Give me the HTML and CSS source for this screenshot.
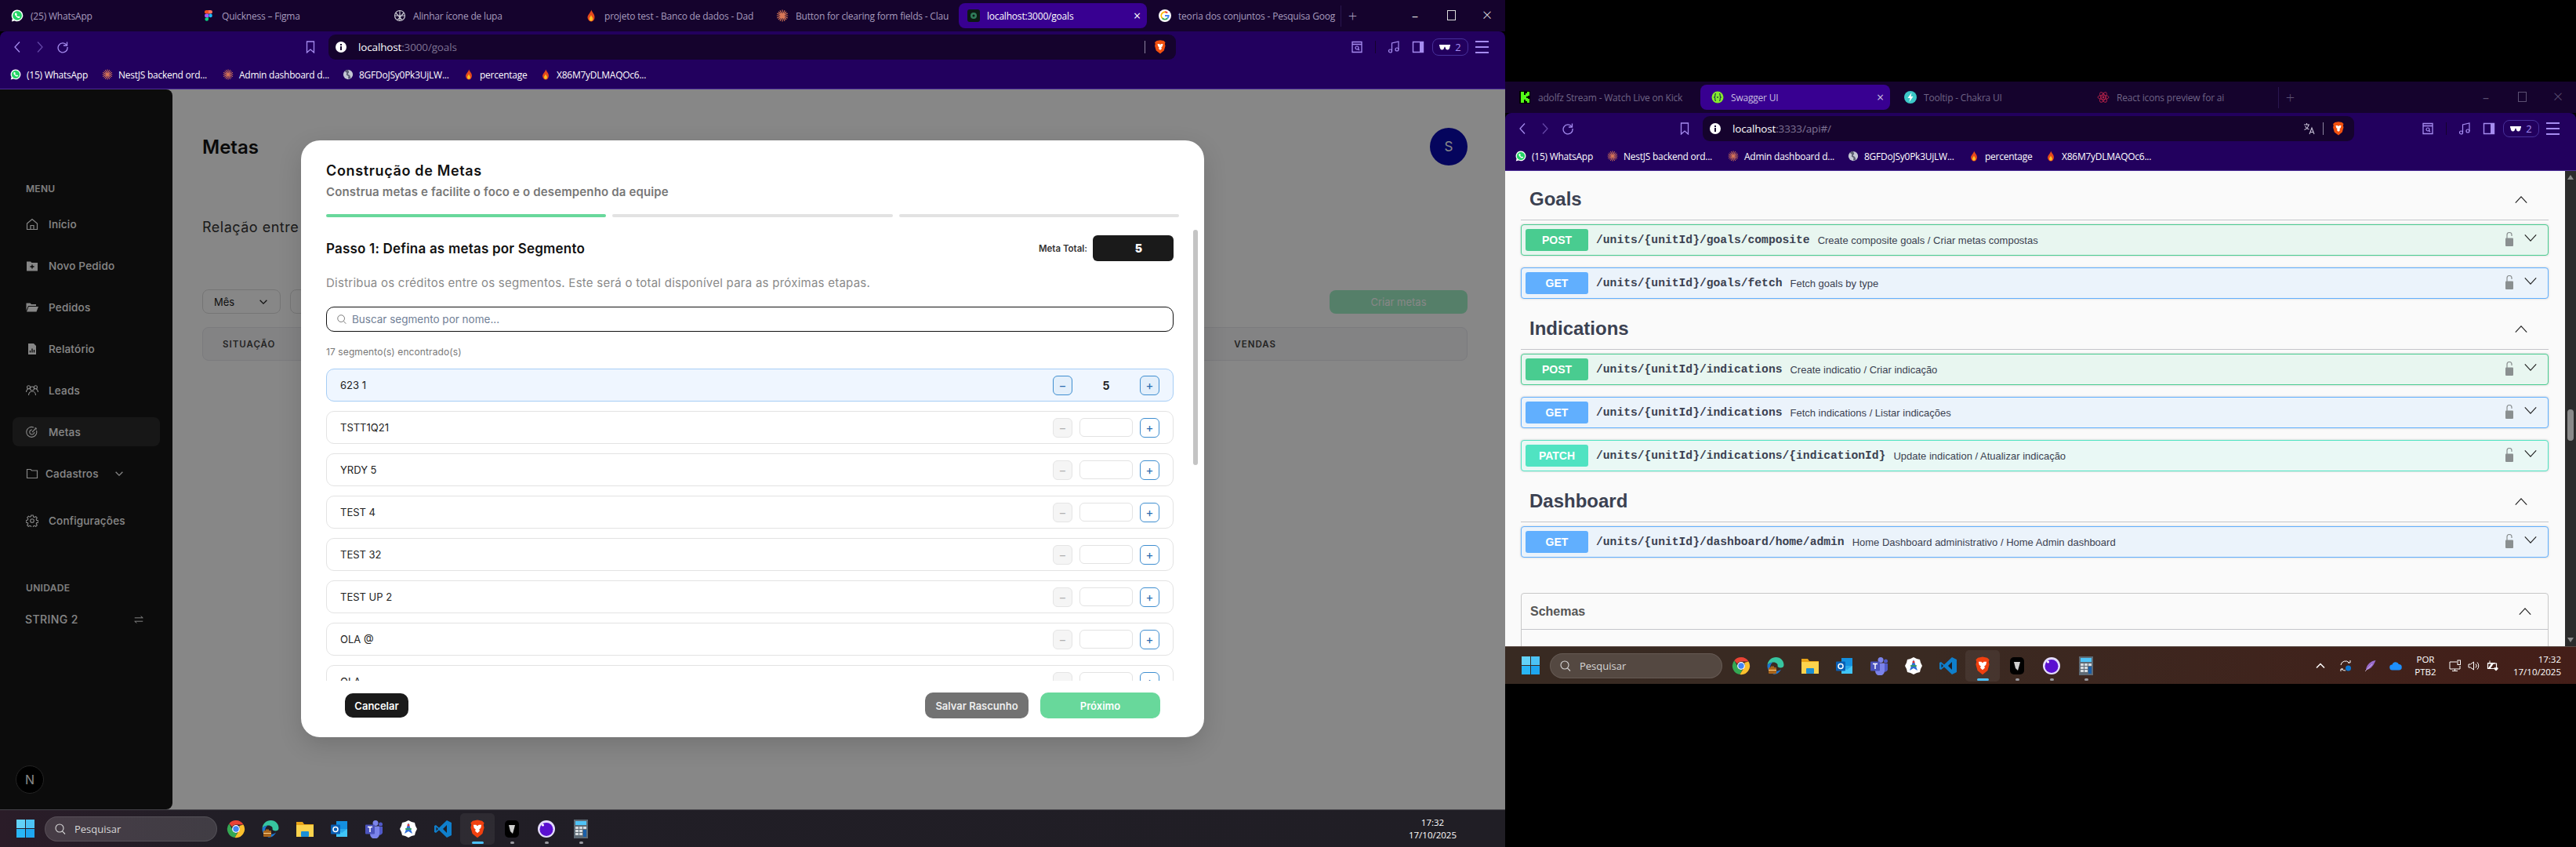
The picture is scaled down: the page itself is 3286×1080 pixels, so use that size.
FILE: index.html
```html
<!DOCTYPE html>
<html>
<head>
    <title>Metas / Swagger UI</title>
    <link rel="stylesheet" href="styles.css">
</head>
<body>

<svg class="defs" width="0" height="0">
    <!-- favicons -->
    <symbol id="f-wa" viewBox="0 0 16 16"><path d="M8 .6a7.3 7.3 0 0 0-6.2 11.1L.9 15.4l3.8-1A7.3 7.3 0 1 0 8 .6z" fill="#fff"/><circle cx="8" cy="7.9" r="5.9" fill="#25d366"/><path d="M5.6 4.6c-1 .8-.8 2.4.5 4s3 2.7 4.3 2.3c.8-.2 1.2-1 1-1.5L10 8.5l-.8.8c-.8-.3-1.7-1.2-2.1-2.1l.7-.8-.9-1.8z" fill="#fff"/></symbol>
    <symbol id="f-figma" viewBox="0 0 16 16"><path d="M5 1h3v4.6H5.3A2.3 2.3 0 0 1 5 1z" fill="#f24e1e"/><path d="M8 1h2.7a2.3 2.3 0 0 1 0 4.6H8z" fill="#ff7262"/><path d="M8 5.6H5.3a2.3 2.3 0 0 0 0 4.6H8z" fill="#a259ff"/><circle cx="10.5" cy="7.9" r="2.3" fill="#1abcfe"/><path d="M8 10.2H5.3A2.3 2.3 0 1 0 8 12.5z" fill="#0acf83"/></symbol>
    <symbol id="f-gpt" viewBox="0 0 16 16"><g fill="none" stroke="#c8c8d0" stroke-width="1.2"><circle cx="8" cy="8" r="6.5"/><path d="M3 4.5l8 9M13 4.5l-8 9M8 1.5v13M2 8h12"/></g></symbol>
    <symbol id="f-fire" viewBox="0 0 16 16"><path d="M8.3.5c.6 3 4.2 5 4.2 9.2a4.5 5.5 0 0 1-9 .6C3.500 7 7.200 4.500 8.300.5z" fill="#e5481c"/><path d="M8 7c.4 2 2.300 3 2.300 4.800a2.300 3 0 0 1-4.600 0C5.700 10 7.600 9 8 7z" fill="#fbbf24"/></symbol>
    <symbol id="f-spark" viewBox="0 0 16 16"><path d="M8 .5v15M.8 8h14.400M3 3l10 10M13 3L3 13M5 1.200l6 13.600M11 1.200L5 14.800M1.200 5l13.600 6M14.800 5L1.200 11" stroke="#d97757" stroke-width="1.100"/></symbol>
    <symbol id="f-globe" viewBox="0 0 16 16"><circle cx="8" cy="8" r="7" fill="#c4c7d4"/><path d="M8 1a7 7 0 0 0-5 2l3 2.500-.5 3 3 2-.5 3.800A7 7 0 0 0 12 13l-1.500-4-3-1.500 2-3L8 1z" fill="#5b5f72"/></symbol>
    <symbol id="f-goals" viewBox="0 0 16 16"><rect width="16" height="16" rx="3" fill="#0c1a14"/><circle cx="8" cy="8" r="4" fill="#2f7d5a"/><circle cx="8" cy="8" r="1.500" fill="#0c1a14"/></symbol>
    <symbol id="f-google" viewBox="0 0 16 16"><circle cx="8" cy="8" r="8" fill="#fff"/><path d="M8 3.300a4.700 4.700 0 0 1 3.200 1.200" fill="none" stroke="#ea4335" stroke-width="1.900"/><path d="M4.700 4.700A4.700 4.700 0 0 1 8 3.300M4.700 4.700a4.700 4.700 0 0 0 0 6.600" fill="none" stroke="#fbbc05" stroke-width="1.900"/><path d="M4.700 11.300a4.700 4.700 0 0 0 6.600 0" fill="none" stroke="#34a853" stroke-width="1.900"/><path d="M11.300 11.300A4.700 4.700 0 0 0 12.700 8H8" fill="none" stroke="#4285f4" stroke-width="1.900"/></symbol>
    <symbol id="f-kick" viewBox="0 0 16 16"><rect x="1" width="14" height="16" fill="#000"/><path d="M3 1h4v4h2V3h2V1h3v5h-2v1H10v2h2v1h2v5h-3v-2H9v-2H7v4H3z" fill="#53fc18"/></symbol>
    <symbol id="f-swagger" viewBox="0 0 16 16"><circle cx="8" cy="8" r="7.500" fill="#85ea2d"/><path d="M6 3.500c-1.500 0-1.200 2-1.200 3S3.800 8 3.800 8s1 .5 1 1.500-.3 3 1.200 3M10 3.500c1.500 0 1.200 2 1.200 3s1 1.500 1 1.500-1 .5-1 1.500.3 3-1.200 3" fill="none" stroke="#173647" stroke-width="1.100"/><circle cx="8" cy="8" r=".9" fill="#173647"/></symbol>
    <symbol id="f-chakra" viewBox="0 0 16 16"><circle cx="8" cy="8" r="8" fill="#3cc8c8"/><path d="M9.500 2L4.500 9h3l-1 5 5-7h-3z" fill="#fff"/></symbol>
    <symbol id="f-react" viewBox="0 0 16 16"><g fill="none" stroke="#b8224a" stroke-width=".9"><ellipse cx="8" cy="8" rx="7" ry="2.800"/><ellipse cx="8" cy="8" rx="7" ry="2.800" transform="rotate(60 8 8)"/><ellipse cx="8" cy="8" rx="7" ry="2.800" transform="rotate(120 8 8)"/></g><circle cx="8" cy="8" r="1.400" fill="#b8224a"/></symbol>

    <!-- toolbar -->
    <symbol id="t-back" viewBox="0 0 16 16"><path d="M11 1.500L5 8l6 6.500" fill="none" stroke="currentColor" stroke-width="1.300"/></symbol>
    <symbol id="t-fwd" viewBox="0 0 16 16"><path d="M5 1.500L11 8l-6 6.500" fill="none" stroke="currentColor" stroke-width="1.300"/></symbol>
    <symbol id="t-reload" viewBox="0 0 16 16"><path d="M13 5.500A6 6 0 1 0 14 8" fill="none" stroke="currentColor" stroke-width="1.300"/><path d="M13.500 1.500v4.500H9" fill="none" stroke="currentColor" stroke-width="1.300"/></symbol>
    <symbol id="t-mark" viewBox="0 0 16 16"><path d="M3.500 1h9v14L8 11l-4.500 4z" fill="none" stroke="currentColor" stroke-width="1.300"/></symbol>
    <symbol id="t-info" viewBox="0 0 16 16"><circle cx="8" cy="8" r="7" fill="#fff"/><path d="M7 7h2v5H7zM7 4h2v2H7z" fill="#15032d"/></symbol>
    <symbol id="t-brave" viewBox="0 0 16 18"><path d="M3.500 1L8 .2 12.500 1l2 2-.6 2 .6 2.500-1.700 6L8 17.500l-5.200-4-1.700-6L1.700 5l-.6-2z" fill="#f1500f"/><path d="M4.500 5h2.300L8 6l1.200-1h2.300l-.7 3L9.300 9.500 10 11l-2 2-2-2 .7-1.500L5.200 8z" fill="#fff"/></symbol>
    <symbol id="t-reader" viewBox="0 0 16 16"><path d="M2 1.500h12v13H2zM2 4.500h12" fill="none" stroke="currentColor" stroke-width="1.300"/><circle cx="8" cy="9" r="2" fill="none" stroke="currentColor" stroke-width="1.200"/><path d="M9.500 10.500l1.500 1.500" stroke="currentColor" stroke-width="1.200"/></symbol>
    <symbol id="t-music" viewBox="0 0 16 16"><circle cx="3.500" cy="13" r="2" fill="none" stroke="currentColor" stroke-width="1.200"/><circle cx="12" cy="11" r="2" fill="none" stroke="currentColor" stroke-width="1.200"/><path d="M5.500 13V3l8.500-2v10" fill="none" stroke="currentColor" stroke-width="1.200"/></symbol>
    <symbol id="t-side" viewBox="0 0 16 16"><path d="M1.500 1.500h13v13h-13z" fill="none" stroke="currentColor" stroke-width="1.400"/><path d="M10 1.500h4.500v13H10z" fill="currentColor"/></symbol>
    <symbol id="t-glass" viewBox="0 0 16 10"><path d="M0 1h16v2h-.5c0 3-1.500 5.500-3.500 5.500S8.800 6 8.500 4h-1C7.200 6 6 8.500 4 8.500S.5 6 .5 3H0z" fill="#fff"/></symbol>
    <symbol id="t-trans" viewBox="0 0 16 16"><path d="M1 3h7M4.500 1v2M7 3c-.5 3-3 5.500-5.500 6.500M2.500 5c1 2 3 3.500 5 4M8 15l3-8 3 8M9 12.500h4" fill="none" stroke="#c9c2d8" stroke-width="1.100"/></symbol>

    <!-- sidebar -->
    <symbol id="n-home" viewBox="0 0 16 16"><path d="M1.500 7L8 1.500 14.500 7v7.500h-13zM6 14.500v-5h4v5" fill="none" stroke="currentColor" stroke-width="1.200"/></symbol>
    <symbol id="n-new" viewBox="0 0 16 16"><path d="M1 2.500h5L7.500 4H15v10.500H1z" fill="currentColor"/><path d="M8 6.500v5M5.500 9h5" stroke="#0c0c0c" stroke-width="1.300"/></symbol>
    <symbol id="n-open" viewBox="0 0 16 16"><path d="M.5 2.500h5L7 4h6v2H3L.5 12z" fill="currentColor"/><path d="M3.500 7H16l-2.500 6.500H1z" fill="currentColor"/></symbol>
    <symbol id="n-report" viewBox="0 0 16 16"><path d="M3 1h7l3 3v11H3z" fill="currentColor"/><path d="M5.500 12.500V10M8 12.500V7.500M10.500 12.500V9" stroke="#0c0c0c" stroke-width="1.300"/></symbol>
    <symbol id="n-leads" viewBox="0 0 16 16"><g fill="none" stroke="currentColor" stroke-width="1.100"><circle cx="8" cy="5.500" r="2.500"/><path d="M3.500 14c0-3 2-5 4.500-5s4.500 2 4.500 5"/><circle cx="3.500" cy="3.800" r="2"/><circle cx="12.500" cy="3.800" r="2"/><path d="M.5 10c0-2 1-3.500 2.500-4M15.500 10c0-2-1-3.500-2.500-4"/></g></symbol>
    <symbol id="n-goal" viewBox="0 0 16 16"><g fill="none" stroke="currentColor" stroke-width="1.100"><path d="M13.500 6A6.500 6.500 0 1 1 10 2"/><path d="M10.800 8A3 3 0 1 1 8 5"/><path d="M8 8l5-5M11.500 2.500L13 3l.5 1.500"/></g></symbol>
    <symbol id="n-folder" viewBox="0 0 16 16"><path d="M1.500 2.500h4.500L7.500 4H14.500v9.500h-13z" fill="none" stroke="currentColor" stroke-width="1.200"/></symbol>
    <symbol id="n-gear" viewBox="0 0 16 16"><g fill="none" stroke="currentColor" stroke-width="1.100"><circle cx="8" cy="8" r="2.300"/><path d="M6.800 1h2.400l.4 2 1.300.6 1.800-1 1.600 1.800-1.100 1.600.5 1.400 2 .4v2.400l-2 .4-.5 1.300 1.100 1.700-1.600 1.700-1.800-1-1.300.5-.4 1.700H6.800l-.4-1.700-1.300-.5-1.800 1-1.600-1.700 1.100-1.700-.5-1.300-2-.4V7.400l2-.4.500-1.400-1.100-1.600 1.600-1.800 1.800 1 1.300-.6z"/></g></symbol>
    <symbol id="n-swap" viewBox="0 0 16 16"><path d="M2 5.500h12M11 3l3 2.500M14 10.500H2M5 13l-3-2.500" fill="none" stroke="currentColor" stroke-width="1.100"/></symbol>
    <symbol id="chev" viewBox="0 0 16 16"><path d="M3 5.500L8 10.500l5-5" fill="none" stroke="currentColor" stroke-width="1.500"/></symbol>
    <symbol id="search" viewBox="0 0 16 16"><circle cx="7" cy="7" r="5" fill="none" stroke="currentColor" stroke-width="1.100"/><path d="M10.500 10.800L14 14.500" stroke="currentColor" stroke-width="1.100"/></symbol>

    <!-- swagger -->
    <symbol id="s-up" viewBox="0 0 20 10"><path d="M2 9.500L10 1l8 8.500" fill="none" stroke="#222" stroke-width="1.300"/></symbol>
    <symbol id="s-down" viewBox="0 0 20 10"><path d="M2 .5L10 9l8-8.500" fill="none" stroke="#222" stroke-width="1.300"/></symbol>
    <symbol id="s-lock" viewBox="0 0 14 18"><path d="M4 8V3.500a3 3 0 0 1 6 0V5" fill="none" stroke="#8a8f90" stroke-width="1.200"/><rect x="2" y="7.500" width="10" height="10.500" rx="1" fill="#8a8f90"/></symbol>

    <!-- taskbar -->
    <symbol id="b-win" viewBox="0 0 23 23"><path d="M0 0h11v11H0z" fill="#63d2f8"/><path d="M12 0h11v11H12z" fill="#4cc3f5"/><path d="M0 12h11v11H0z" fill="#29b6f6"/><path d="M12 12h11v11H12z" fill="#1ea6ef"/></symbol>
    <symbol id="b-chrome" viewBox="0 0 24 24"><path d="M12 1a11 11 0 0 1 9.500 5.500H12A5.500 5.500 0 0 0 7 9.300L3.300 5.200A11 11 0 0 1 12 1z" fill="#ea4335"/><path d="M3.300 5.200L8.200 14a5.500 5.500 0 0 0 5.500 3.200L10.500 23A11 11 0 0 1 3.300 5.200z" fill="#34a853"/><path d="M21.500 6.500A11 11 0 0 1 10.500 23l5-8.500A5.500 5.500 0 0 0 16 8z" fill="#fbc02d"/><circle cx="12" cy="12" r="4.300" fill="#4285f4" stroke="#fff" stroke-width="1.200"/></symbol>
    <symbol id="b-edge" viewBox="0 0 24 24"><path d="M1.500 11C2 5 7 1 12.500 1c6 0 10 4.500 10 10 0 2.500-2 3.500-4 3.500-2.500 0-4-1-4-2.500 1-2-2-5-6-4.500C5.500 8 2.500 9 1.500 11z" fill="#37c5a0"/><path d="M1.500 11c1-2 4-3 7-3.500-3 2-4 5-3 9 .5 2 2 4 4 5.500C5 21.500 1 17 1.500 11z" fill="#1b76d2"/><path d="M9 22.500c-2-1.500-3.500-3.500-4-5.500 3 3 9 3 14-.5-2 4-6 7-10 6z" fill="#1b76d2"/><rect x="3" y="14" width="10" height="8" rx="1" fill="#a8641c"/><rect x="6" y="12.500" width="4" height="2" fill="#a8641c"/><path d="M3 17.500h10" stroke="#ffd28a"/></symbol>
    <symbol id="b-folder" viewBox="0 0 24 24"><path d="M1 3h8l2 3h12v16H1z" fill="#e8a317"/><path d="M1 7h22v15H1z" fill="#fcd34d"/><rect x="7" y="15" width="10" height="7" rx="1" fill="#1b8fd6"/></symbol>
    <symbol id="b-outlook" viewBox="0 0 24 24"><path d="M8 2h14v18H8z" fill="#1490df"/><path d="M8 12h14v10H8z" fill="#28a8ea"/><path d="M8 12l7 5 7-5v10H8z" fill="#50d9ff" opacity=".6"/><rect x="1" y="6.500" width="12" height="12" rx="1" fill="#0a5fb4"/><circle cx="7" cy="12.500" r="3" fill="none" stroke="#fff" stroke-width="1.500"/></symbol>
    <symbol id="b-teams" viewBox="0 0 24 24"><circle cx="14" cy="4.500" r="3.500" fill="#7b83eb"/><circle cx="20.500" cy="6" r="2.500" fill="#5059c9"/><path d="M17 9h6v8a4 4 0 0 1-6 2z" fill="#5059c9"/><path d="M7 8.500h12v10a6 6 0 0 1-12 0z" fill="#7b83eb"/><rect x="1" y="6.500" width="12" height="12" rx="1" fill="#4b53bc"/><path d="M4 9.500h6M7 9.500v6.500" stroke="#fff" stroke-width="1.500"/></symbol>
    <symbol id="b-app" viewBox="0 0 24 24"><path d="M12 1l4 2 4 1 1 4 2 4-2 4-1 4-4 1-4 2-4-2-4-1-1-4-2-4 2-4 1-4 4-1z" fill="#fff"/><path d="M12 4l5 14-5-3-5 3z" fill="#2f6fd6"/><path d="M8 12h8" stroke="#31a24c" stroke-width="1.500"/><circle cx="12" cy="7" r="1.500" fill="#d33"/></symbol>
    <symbol id="b-code" viewBox="0 0 24 24"><path d="M17 1l6 3v16l-6 3L7 13.500 3 17l-2-1V8l2-1 4 3.500z" fill="#0f7fcc"/><path d="M17 7l-5 5 5 5z" fill="#1f1d24"/><path d="M3.500 9.500L6 12l-2.500 2.500z" fill="#1f1d24"/></symbol>
    <symbol id="b-brave" viewBox="0 0 24 28"><path d="M5 2l7-1.500L19 2l3 3-1 3 1 4-2.500 9-7.500 6-7.500-6L2 12l1-4-1-3z" fill="#f1400f"/><path d="M6 8h4l2 1.500L14 8h4l-1 4.500-2.500 2.500 1 2-3.500 3-3.500-3 1-2L7 12.500z" fill="#fff"/></symbol>
    <symbol id="b-black" viewBox="0 0 24 24"><rect x="3" y="1" width="18" height="22" rx="5" fill="#000"/><path d="M8 7h8l-1 4-2 7-3-3-1-4z" fill="#cfcfcf"/></symbol>
    <symbol id="b-ring" viewBox="0 0 24 24"><circle cx="12" cy="12" r="11" fill="#e4dcff"/><circle cx="12" cy="12.500" r="8.500" fill="#5a10d0"/><circle cx="7.500" cy="7" r="1.500" fill="#fff"/></symbol>
    <symbol id="b-calc" viewBox="0 0 24 24"><rect x="3" y="0" width="18" height="24" fill="#5e6a75"/><rect x="5" y="2" width="14" height="5" fill="#4fc3f7"/><path d="M5 9h4v3H5zM10 9h4v3h-4zM15 9h4v3h-4zM5 13h4v3H5zM10 13h4v3h-4zM5 17h4v3H5zM10 17h4v3h-4z" fill="#d5dade"/><path d="M15 13h4v9h-4z" fill="#1a5fa8"/></symbol>
    <symbol id="y-sync" viewBox="0 0 16 16"><path d="M2 7a6 6 0 0 1 10.500-3M14 4V1M14 4h-3M2 12h3M2 12v3M3 12a6 6 0 0 0 5 2" fill="none" stroke="#fff" stroke-width="1"/><circle cx="11.500" cy="11" r="3.500" fill="#0a78d6"/></symbol>
    <symbol id="y-feather" viewBox="0 0 16 16"><path d="M14.500 1C8 2 3 6 2 13c4 0 9-3 12.500-12z" fill="#9a6ccc"/><path d="M1 15L10 6" stroke="#d9c6ee" stroke-width=".8"/></symbol>
    <symbol id="y-cloud" viewBox="0 0 16 16"><path d="M4 13.500a3.500 3.500 0 0 1-.5-7A4.500 4.500 0 0 1 12 6a3.700 3.700 0 0 1 0 7.500z" fill="#1e90ff"/></symbol>
    <symbol id="y-monitor" viewBox="0 0 16 16"><path d="M1 3h9M1 3v9h13V8M7.500 12v2M4 14.500h7" fill="none" stroke="#fff" stroke-width="1"/><rect x="11" y="1" width="3.500" height="5.500" fill="none" stroke="#fff" stroke-width="1"/></symbol>
    <symbol id="y-sound" viewBox="0 0 16 16"><path d="M1 6v4h2.500L7.500 13V3L3.500 6zM10 5.500a3.500 3.500 0 0 1 0 5M12 3.500a6.500 6.500 0 0 1 0 9" fill="none" stroke="#fff" stroke-width="1"/></symbol>
    <symbol id="y-batt" viewBox="0 0 16 16"><path d="M4 1.500v3M1 4.500h6l4 0" stroke="#fff" fill="none"/><path d="M1.500 5h11v6.500h-11z" fill="none" stroke="#fff" stroke-width="1.200"/><path d="M2 11l4-6h3l-4 6z" fill="#fff"/><path d="M12 14.500L9.500 12c-1-1.500 1.500-3 2.500-1.500 1-1.500 3.500 0 2.500 1.500z" fill="#fff"/></symbol>
</svg>

<div class="desktop">

    <!-- main window -->
    <div class="win win-main">
        <div class="tabstrip">
            <div class="tab"><svg class="fav"><use href="#f-wa"/></svg><span>(25) WhatsApp</span></div>
            <div class="tab"><svg class="fav"><use href="#f-figma"/></svg><span>Quickness – Figma</span></div>
            <div class="tab"><svg class="fav"><use href="#f-gpt"/></svg><span>Alinhar ícone de lupa</span></div>
            <div class="tab"><svg class="fav"><use href="#f-fire"/></svg><span>projeto test - Banco de dados - Dad</span></div>
            <div class="tab"><svg class="fav"><use href="#f-spark"/></svg><span>Button for clearing form fields - Clau</span></div>
            <div class="tab active"><svg class="fav"><use href="#f-goals"/></svg><span>localhost:3000/goals</span><b class="tab-x">×</b></div>
            <div class="tab"><svg class="fav"><use href="#f-google"/></svg><span>teoria dos conjuntos - Pesquisa Goog</span></div>
            <div class="newtab">+</div>
            <div class="winctl"><span class="ctl">–</span><span class="ctl ctl-max"></span><span class="ctl ctl-x">×</span></div>
        </div>
        <div class="toolbar">
            <div class="toolrow">
                <svg class="ti"><use href="#t-back"/></svg>
                <svg class="ti dim"><use href="#t-fwd"/></svg>
                <svg class="ti"><use href="#t-reload"/></svg>
                <svg class="ti mark"><use href="#t-mark"/></svg>
                <div class="addr">
                    <svg class="info"><use href="#t-info"/></svg>
                    <span class="host">localhost</span><span class="rest">:3000/goals</span>
                    <i class="addr-sep"></i>
                    <svg class="shield"><use href="#t-brave"/></svg>
                </div>
                <div class="toolright">
                    <svg class="ti"><use href="#t-reader"/></svg>
                    <i class="tool-sep"></i>
                    <svg class="ti"><use href="#t-music"/></svg>
                    <svg class="ti"><use href="#t-side"/></svg>
                    <div class="pill"><svg class="glass"><use href="#t-glass"/></svg>2</div>
                    <div class="burger"><i></i><i></i><i></i></div>
                </div>
            </div>
            <div class="bookmarks">
                <div class="bm"><svg class="fav"><use href="#f-wa"/></svg>(15) WhatsApp</div>
                <div class="bm"><svg class="fav"><use href="#f-spark"/></svg>NestJS backend ord...</div>
                <div class="bm"><svg class="fav"><use href="#f-spark"/></svg>Admin dashboard d...</div>
                <div class="bm"><svg class="fav"><use href="#f-globe"/></svg>8GFDoJSy0Pk3UjLW...</div>
                <div class="bm"><svg class="fav"><use href="#f-fire"/></svg>percentage</div>
                <div class="bm"><svg class="fav"><use href="#f-fire"/></svg>X86M7yDLMAQOc6...</div>
            </div>
        </div>

        <div class="page">
            <div class="sidebar">
                <div class="side-label">MENU</div>
                <div class="nav"><svg><use href="#n-home"/></svg>Início</div>
                <div class="nav"><svg><use href="#n-new"/></svg>Novo Pedido</div>
                <div class="nav"><svg><use href="#n-open"/></svg>Pedidos</div>
                <div class="nav"><svg><use href="#n-report"/></svg>Relatório</div>
                <div class="nav"><svg><use href="#n-leads"/></svg>Leads</div>
                <div class="nav nav-on"><svg><use href="#n-goal"/></svg>Metas</div>
                <div class="nav nav-sub"><svg><use href="#n-folder"/></svg>Cadastros<svg class="nav-chev"><use href="#chev"/></svg></div>
                <div class="nav nav-cfg"><svg><use href="#n-gear"/></svg>Configurações</div>
                <div class="side-label side-unit">UNIDADE</div>
                <div class="unit">STRING 2<svg><use href="#n-swap"/></svg></div>
                <div class="next-badge">N</div>
            </div>
            <div class="content">
                <div class="content-top">
                    <h1>Metas</h1>
                    <div class="avatar">S</div>
                </div>
                <p class="lead">Relação entre metas e vendas</p>
                <div class="filters">
                    <div class="select">Mês<svg><use href="#chev"/></svg></div>
                    <div class="select">Ano<svg><use href="#chev"/></svg></div>
                    <div class="btn-new">Criar metas</div>
                </div>
                <div class="thead"><span>SITUAÇÃO</span><span>VENDAS</span></div>
            </div>

            <div class="overlay">
                <div class="modal">
                    <div class="modal-head">
                        <h2>Construção de Metas</h2>
                        <p>Construa metas e facilite o foco e o desempenho da equipe</p>
                        <div class="steps"><i class="on"></i><i></i><i></i></div>
                    </div>
                    <div class="modal-body">
                        <div class="step-top">
                            <h3>Passo 1: Defina as metas por Segmento</h3>
                            <div class="total"><span>Meta Total:</span><b>5</b></div>
                        </div>
                        <p class="hint">Distribua os créditos entre os segmentos. Este será o total disponível para as próximas etapas.</p>
                        <div class="seg-search"><svg><use href="#search"/></svg>Buscar segmento por nome...</div>
                        <div class="seg-count">17 segmento(s) encontrado(s)</div>
                        <div class="seg seg-on"><span>623 1</span><div class="stepper"><i class="minus">−</i><b class="val">5</b><i class="plus">+</i></div></div>
                        <div class="seg"><span>TSTT1Q21</span><div class="stepper"><i class="minus">−</i><b class="val"></b><i class="plus">+</i></div></div>
                        <div class="seg"><span>YRDY 5</span><div class="stepper"><i class="minus">−</i><b class="val"></b><i class="plus">+</i></div></div>
                        <div class="seg"><span>TEST 4</span><div class="stepper"><i class="minus">−</i><b class="val"></b><i class="plus">+</i></div></div>
                        <div class="seg"><span>TEST 32</span><div class="stepper"><i class="minus">−</i><b class="val"></b><i class="plus">+</i></div></div>
                        <div class="seg"><span>TEST UP 2</span><div class="stepper"><i class="minus">−</i><b class="val"></b><i class="plus">+</i></div></div>
                        <div class="seg"><span>OLA @</span><div class="stepper"><i class="minus">−</i><b class="val"></b><i class="plus">+</i></div></div>
                        <div class="seg"><span>OLA</span><div class="stepper"><i class="minus">−</i><b class="val"></b><i class="plus">+</i></div></div>
                    </div>
                    <div class="modal-foot">
                        <div class="btn btn-cancel">Cancelar</div>
                        <div class="btn btn-draft">Salvar Rascunho</div>
                        <div class="btn btn-next">Próximo</div>
                    </div>
                    <div class="modal-thumb"></div>
                </div>
            </div>
        </div>

        <div class="taskbar">
            <svg class="startlogo"><use href="#b-win"/></svg>
            <div class="tsearch"><svg><use href="#search"/></svg>Pesquisar</div>
            <div class="apps">
                <div class="app"><svg><use href="#b-chrome"/></svg></div>
                <div class="app"><svg><use href="#b-edge"/></svg></div>
                <div class="app"><svg><use href="#b-folder"/></svg></div>
                <div class="app"><svg><use href="#b-outlook"/></svg></div>
                <div class="app"><svg><use href="#b-teams"/></svg></div>
                <div class="app"><svg><use href="#b-app"/></svg></div>
                <div class="app"><svg><use href="#b-code"/></svg></div>
                <div class="app app-on"><svg><use href="#b-brave"/></svg></div>
                <div class="app app-run"><svg><use href="#b-black"/></svg></div>
                <div class="app app-run"><svg><use href="#b-ring"/></svg></div>
                <div class="app app-run"><svg><use href="#b-calc"/></svg></div>
            </div>
            <div class="clock">17:32<br>17/10/2025</div>
        </div>
    </div>

    <!-- second window -->
    <div class="win win-api">
        <div class="tabstrip">
            <div class="tab"><svg class="fav"><use href="#f-kick"/></svg><span>adolfz Stream - Watch Live on Kick</span></div>
            <div class="tab active"><svg class="fav"><use href="#f-swagger"/></svg><span>Swagger UI</span><b class="tab-x">×</b></div>
            <div class="tab"><svg class="fav"><use href="#f-chakra"/></svg><span>Tooltip - Chakra UI</span></div>
            <div class="tab"><svg class="fav"><use href="#f-react"/></svg><span>React icons preview for ai</span></div>
            <div class="newtab">+</div>
            <div class="winctl"><span class="ctl">–</span><span class="ctl ctl-max"></span><span class="ctl ctl-x">×</span></div>
        </div>
        <div class="toolbar">
            <div class="toolrow">
                <svg class="ti"><use href="#t-back"/></svg>
                <svg class="ti dim"><use href="#t-fwd"/></svg>
                <svg class="ti"><use href="#t-reload"/></svg>
                <svg class="ti mark"><use href="#t-mark"/></svg>
                <div class="addr">
                    <svg class="info"><use href="#t-info"/></svg>
                    <span class="host">localhost</span><span class="rest">:3333/api#/</span>
                    <svg class="trans"><use href="#t-trans"/></svg>
                    <i class="addr-sep"></i>
                    <svg class="shield"><use href="#t-brave"/></svg>
                </div>
                <div class="toolright">
                    <svg class="ti"><use href="#t-reader"/></svg>
                    <i class="tool-sep"></i>
                    <svg class="ti"><use href="#t-music"/></svg>
                    <svg class="ti"><use href="#t-side"/></svg>
                    <div class="pill"><svg class="glass"><use href="#t-glass"/></svg>2</div>
                    <div class="burger"><i></i><i></i><i></i></div>
                </div>
            </div>
            <div class="bookmarks">
                <div class="bm"><svg class="fav"><use href="#f-wa"/></svg>(15) WhatsApp</div>
                <div class="bm"><svg class="fav"><use href="#f-spark"/></svg>NestJS backend ord...</div>
                <div class="bm"><svg class="fav"><use href="#f-spark"/></svg>Admin dashboard d...</div>
                <div class="bm"><svg class="fav"><use href="#f-globe"/></svg>8GFDoJSy0Pk3UjLW...</div>
                <div class="bm"><svg class="fav"><use href="#f-fire"/></svg>percentage</div>
                <div class="bm"><svg class="fav"><use href="#f-fire"/></svg>X86M7yDLMAQOc6...</div>
            </div>
        </div>

        <div class="page page-api">
            <div class="swagger">
                <div class="tag">
                    <div class="tag-head"><h4>Goals</h4><svg><use href="#s-up"/></svg></div>
                    <div class="op op-post"><span class="method">POST</span><span class="path">/units/{unitId}/goals/composite</span><span class="sum">Create composite goals / Criar metas compostas</span><svg class="lock"><use href="#s-lock"/></svg><svg class="down"><use href="#s-down"/></svg></div>
                    <div class="op op-get"><span class="method">GET</span><span class="path">/units/{unitId}/goals/fetch</span><span class="sum">Fetch goals by type</span><svg class="lock"><use href="#s-lock"/></svg><svg class="down"><use href="#s-down"/></svg></div>
                </div>
                <div class="tag">
                    <div class="tag-head"><h4>Indications</h4><svg><use href="#s-up"/></svg></div>
                    <div class="op op-post"><span class="method">POST</span><span class="path">/units/{unitId}/indications</span><span class="sum">Create indicatio / Criar indicação</span><svg class="lock"><use href="#s-lock"/></svg><svg class="down"><use href="#s-down"/></svg></div>
                    <div class="op op-get"><span class="method">GET</span><span class="path">/units/{unitId}/indications</span><span class="sum">Fetch indications / Listar indicações</span><svg class="lock"><use href="#s-lock"/></svg><svg class="down"><use href="#s-down"/></svg></div>
                    <div class="op op-patch"><span class="method">PATCH</span><span class="path">/units/{unitId}/indications/{indicationId}</span><span class="sum">Update indication / Atualizar indicação</span><svg class="lock"><use href="#s-lock"/></svg><svg class="down"><use href="#s-down"/></svg></div>
                </div>
                <div class="tag">
                    <div class="tag-head"><h4>Dashboard</h4><svg><use href="#s-up"/></svg></div>
                    <div class="op op-get"><span class="method">GET</span><span class="path">/units/{unitId}/dashboard/home/admin</span><span class="sum">Home Dashboard administrativo / Home Admin dashboard</span><svg class="lock"><use href="#s-lock"/></svg><svg class="down"><use href="#s-down"/></svg></div>
                </div>
                <div class="schemas">
                    <div class="schemas-head"><h4>Schemas</h4><svg><use href="#s-up"/></svg></div>
                </div>
            </div>
            <div class="scrollbar"><i class="arr-up"></i><i class="sb-thumb"></i><i class="arr-down"></i></div>
        </div>

        <div class="taskbar">
            <svg class="startlogo"><use href="#b-win"/></svg>
            <div class="tsearch"><svg><use href="#search"/></svg>Pesquisar</div>
            <div class="apps">
                <div class="app"><svg><use href="#b-chrome"/></svg></div>
                <div class="app"><svg><use href="#b-edge"/></svg></div>
                <div class="app"><svg><use href="#b-folder"/></svg></div>
                <div class="app"><svg><use href="#b-outlook"/></svg></div>
                <div class="app"><svg><use href="#b-teams"/></svg></div>
                <div class="app"><svg><use href="#b-app"/></svg></div>
                <div class="app"><svg><use href="#b-code"/></svg></div>
                <div class="app app-on"><svg><use href="#b-brave"/></svg></div>
                <div class="app app-run"><svg><use href="#b-black"/></svg></div>
                <div class="app app-run"><svg><use href="#b-ring"/></svg></div>
                <div class="app app-run"><svg><use href="#b-calc"/></svg></div>
            </div>
            <div class="tray">
                <svg class="tray-up"><use href="#chev"/></svg>
                <svg><use href="#y-sync"/></svg>
                <svg><use href="#y-feather"/></svg>
                <svg><use href="#y-cloud"/></svg>
                <div class="lang">POR<br>PTB2</div>
                <svg><use href="#y-monitor"/></svg>
                <svg><use href="#y-sound"/></svg>
                <svg><use href="#y-batt"/></svg>
            </div>
            <div class="clock">17:32<br>17/10/2025</div>
        </div>
    </div>
</div>

</body>
</html>
```

FILE: styles.css
```css
* {
    box-sizing: border-box;
}

body {
    margin: 0;
    background-color: #000;
    font-family: "Inter", "Liberation Sans", sans-serif;
}

.defs {
    position: absolute;
}

.desktop {
    position: relative;
    width: 3286px;
    height: 1080px;
    overflow: hidden;
    background-color: #000;
}

/* windows sit on the desktop */
.win {
    position: absolute;
    display: flex;
    flex-direction: column;
    overflow: hidden;
}

.win-main {
    left: 0;
    top: 0;
    width: 1920px;
    height: 1080px;
}

.win-api {
    left: 1920px;
    top: 104px;
    width: 1366px;
    height: 768px;
}

/* tab strip */
.tabstrip {
    display: flex;
    align-items: center;
    flex: none;
    height: 40px;
    padding-left: 3px;
    gap: 4px;
    background-color: #15032d;
    font-family: "Open Sans", sans-serif;
    font-size: 12px;
    color: #a79bbd;
}

.tab {
    display: flex;
    align-items: center;
    flex: none;
    gap: 9px;
    width: 240px;
    height: 32px;
    padding: 0 8px 0 11px;
    border-radius: 8px;
    white-space: nowrap;
    overflow: hidden;
    letter-spacing: -0.2px;
}

.win-api .tab {
    width: 242px;
    color: #6f6485;
    padding-left: 14px;
}

.tab span {
    flex: 1;
    min-width: 0;
}

.tab.active {
    background-color: #380091;
    color: #fff;
}

.win-api .tab.active {
    color: #c9bfe0;
}

.tab-x {
    font-size: 16px;
    font-weight: 400;
}

.fav {
    flex: none;
    width: 16px;
    height: 16px;
}

.newtab {
    width: 30px;
    text-align: center;
    font-size: 20px;
    font-weight: 300;
    margin-left: -1px;
    border-left: 1px solid #2a1650;
}

.win-api .newtab,
.win-api .ctl {
    color: #5b5072;
}

.winctl {
    display: flex;
    margin-left: auto;
    width: 138px;
    color: #ddd;
}

.ctl {
    width: 46px;
    text-align: center;
    font-size: 16px;
}

.ctl-max::before {
    content: "";
    display: inline-block;
    width: 9px;
    height: 11px;
    border: 1px solid #ddd;
}

.win-api .ctl-max::before {
    border-color: #5b5072;
}

.ctl-x {
    font-size: 22px;
    font-weight: 300;
    line-height: 18px;
}

/* toolbar */
.toolbar {
    flex: none;
    height: 74px;
    background-color: #22005e;
    border-radius: 8px 8px 0 0;
    border-bottom: 1px solid #4d2f96;
    color: #a68cf0;
}

.toolrow {
    display: flex;
    align-items: center;
    height: 40px;
    padding: 0 0 0 14px;
    gap: 13px;
}

.ti {
    flex: none;
    width: 16px;
    height: 16px;
}

.ti.dim {
    opacity: 0.5;
}

.ti.mark {
    margin-left: 287px;
    margin-right: 2px;
}

.win-api .ti.mark {
    margin-left: 120px;
}

.addr {
    display: flex;
    align-items: center;
    flex: none;
    width: 1081px;
    height: 32px;
    padding: 0 12px 0 8px;
    background-color: #15032d;
    border-radius: 9px;
    font-family: "Open Sans", sans-serif;
    font-size: 13.5px;
    letter-spacing: -0.15px;
}

.win-api .addr {
    width: 831px;
}

.info {
    width: 16px;
    height: 16px;
    margin-right: 14px;
}

.host {
    color: #fff;
}

.rest {
    color: #7f7394;
}

.addr-sep {
    width: 1px;
    height: 16px;
    background-color: #8d84a0;
    margin-left: auto;
    margin-right: 11px;
}

.trans {
    width: 16px;
    height: 16px;
    margin-left: auto;
    margin-right: 9px;
}

.trans + .addr-sep {
    margin-left: 0;
}

.shield {
    width: 16px;
    height: 18px;
}

.toolright {
    display: flex;
    align-items: center;
    margin-left: auto;
    width: 197px;
    padding-right: 13px;
}

.tool-sep {
    width: 1px;
    height: 16px;
    background-color: #15032d;
    margin: 0 15px;
}

.toolright .ti:nth-of-type(3) {
    margin-left: 15px;
    margin-right: 10px;
}

.pill {
    display: flex;
    align-items: center;
    justify-content: center;
    gap: 6px;
    width: 46px;
    height: 22px;
    border: 1px solid #47309a;
    border-radius: 8px;
    font-family: "Open Sans", sans-serif;
    font-size: 13px;
}

.glass {
    width: 14px;
    height: 9px;
}

.burger {
    display: flex;
    flex-direction: column;
    gap: 5px;
    width: 17px;
    margin-left: 9px;
}

.burger i {
    display: block;
    height: 2px;
    background-color: #a68cf0;
}

.bookmarks {
    display: flex;
    align-items: center;
    height: 33px;
    padding-left: 13px;
    padding-bottom: 3px;
    font-family: "Open Sans", sans-serif;
    font-size: 12px;
    letter-spacing: -0.25px;
    color: #fff;
}

.bm {
    display: flex;
    align-items: center;
    gap: 7px;
    flex: none;
    white-space: nowrap;
    width: 117px;
}

.bm:nth-child(2),
.bm:nth-child(4) {
    width: 154px;
}

.bm:nth-child(3) {
    width: 153px;
}

.bm:nth-child(5) {
    width: 98px;
}

.bm .fav {
    width: 14px;
    height: 14px;
}

.page {
    position: relative;
    display: flex;
    flex: 1;
    min-height: 0;
    background-color: #fff;
}

/* dashboard behind the modal */
.sidebar {
    display: flex;
    flex-direction: column;
    flex: none;
    width: 220px;
    padding: 120px 16px 20px;
    background-color: #171717;
    border-radius: 0 8px 8px 0;
    color: #fff;
}

.side-label {
    height: 14px;
    padding-left: 17px;
    font-size: 12px;
    line-height: 14px;
    font-weight: 600;
    letter-spacing: 0.3px;
    color: #f0f0f0;
}

.side-label + .nav {
    margin-top: 19px;
}

.nav {
    display: flex;
    align-items: center;
    gap: 13px;
    height: 37px;
    margin-bottom: 16px;
    padding-left: 17px;
    border-radius: 8px;
    font-size: 13.5px;
    font-weight: 500;
    letter-spacing: 0.2px;
}

.nav svg {
    flex: none;
    width: 16px;
    height: 16px;
}

.nav-on {
    background-color: #2d2d2d;
}

.nav-sub {
    gap: 9px;
}

.nav-sub .nav-chev {
    margin-left: 10px;
    width: 14px;
    height: 14px;
}

.nav-cfg {
    margin-top: 7px;
    margin-bottom: 0;
}

.side-unit {
    margin-top: 61px;
}

.unit {
    display: flex;
    align-items: center;
    justify-content: space-between;
    margin-top: 24px;
    padding: 0 20px 0 16px;
    font-size: 14px;
    font-weight: 500;
    letter-spacing: 0.4px;
}

.unit svg {
    width: 14px;
    height: 14px;
}

.next-badge {
    display: flex;
    align-items: center;
    justify-content: center;
    width: 36px;
    height: 36px;
    margin-top: auto;
    margin-left: 4px;
    border-radius: 50%;
    border: 1px solid #444;
    background-color: #000;
    font-size: 16px;
}

.content {
    flex: 1;
    min-width: 0;
    padding: 0 48px 0 38px;
}

.content-top {
    display: flex;
    align-items: center;
    justify-content: space-between;
    height: 146px;
}

.content-top h1 {
    margin: 0;
    font-size: 24px;
    font-weight: 600;
    color: #111;
}

.avatar {
    display: flex;
    align-items: center;
    justify-content: center;
    width: 48px;
    height: 48px;
    border-radius: 50%;
    background-color: #0b0bb0;
    color: #fff;
    font-size: 17px;
}

.lead {
    margin: 18px 0 0;
    font-size: 18px;
    line-height: 24px;
    letter-spacing: 0.5px;
    color: #333;
}

.filters {
    display: flex;
    align-items: center;
    gap: 12px;
    margin-top: 67px;
}

.select {
    display: flex;
    align-items: center;
    justify-content: space-between;
    width: 100px;
    height: 31px;
    padding: 0 14px;
    border: 1px solid #ddd;
    border-radius: 8px;
    font-size: 13px;
    color: #222;
}

.select svg {
    width: 14px;
    height: 14px;
}

.btn-new {
    display: flex;
    align-items: center;
    justify-content: center;
    width: 176px;
    height: 30px;
    margin-left: auto;
    border-radius: 8px;
    background-color: #a0f0c6;
    font-size: 13px;
    color: #fff;
}

.thead {
    display: flex;
    justify-content: space-between;
    align-items: center;
    height: 43px;
    margin-top: 17px;
    padding: 0 243px 0 25px;
    border: 1px solid #e8e8ee;
    border-radius: 8px;
    background-color: #f7f7f9;
    font-size: 11.5px;
    font-weight: 600;
    letter-spacing: 1px;
    color: #444;
}

/* modal */
.overlay {
    position: absolute;
    inset: 0;
    display: flex;
    justify-content: center;
    align-items: flex-start;
    padding-top: 65px;
    background-color: rgba(0, 0, 0, 0.47);
}

.modal {
    position: relative;
    display: flex;
    flex-direction: column;
    width: 1152px;
    height: 761px;
    padding: 27px 32px 0;
    background-color: #fff;
    border-radius: 24px;
    box-shadow: 0 10px 30px rgba(0, 0, 0, 0.15);
    color: #111;
}

.modal-head {
    flex: none;
    height: 87px;
}

.modal-head h2 {
    margin: 0;
    font-size: 18px;
    line-height: 24px;
    font-weight: 600;
    letter-spacing: 0.65px;
}

.modal-head p {
    margin: 3px 0 0;
    font-size: 15px;
    line-height: 24px;
    font-weight: 600;
    letter-spacing: 0.15px;
    color: #777;
}

.steps {
    display: flex;
    gap: 8px;
    margin-top: 16px;
}

.steps i {
    flex: 1;
    height: 4px;
    border-radius: 2px;
    background-color: #e2e2e2;
}

.steps i.on {
    background-color: #68d89b;
}

.modal-body {
    flex: none;
    height: 575px;
    overflow: hidden;
    padding: 7px 7px 0 0;
}

.step-top {
    display: flex;
    align-items: center;
    justify-content: space-between;
    height: 33px;
}

.step-top h3 {
    margin: 0;
    font-size: 17px;
    font-weight: 600;
    letter-spacing: 0.2px;
}

.total {
    display: flex;
    align-items: center;
    gap: 7px;
    font-size: 11.5px;
    font-weight: 600;
    color: #333;
}

.total b {
    display: flex;
    align-items: center;
    justify-content: center;
    width: 103px;
    height: 33px;
    padding-left: 14px;
    border-radius: 6px;
    background-color: #1a1a1a;
    color: #fff;
    font-size: 14px;
}

.hint {
    margin: 17px 0 0;
    font-size: 15px;
    line-height: 22px;
    letter-spacing: 0.25px;
    color: #8a8a8a;
}

.seg-search {
    display: flex;
    align-items: center;
    gap: 6px;
    height: 32px;
    margin-top: 19px;
    padding-left: 12px;
    border: 1.5px solid #111;
    border-radius: 10px;
    font-size: 13.5px;
    color: #718096;
}

.seg-search svg {
    width: 14px;
    height: 14px;
    color: #777;
}

.seg-count {
    margin-top: 18px;
    font-size: 12px;
    line-height: 16px;
    letter-spacing: 0.1px;
    color: #777;
}

.seg {
    display: flex;
    align-items: center;
    justify-content: space-between;
    height: 42px;
    margin-bottom: 12px;
    padding: 0 17px;
    border: 1px solid #e3e3e3;
    border-radius: 10px;
    font-size: 13px;
    color: #222;
}

.seg-count + .seg {
    margin-top: 13px;
}

.seg-on {
    background-color: #eff6ff;
    border-color: #a6cdf5;
}

.stepper {
    display: flex;
    align-items: center;
    gap: 9px;
}

.stepper i {
    display: flex;
    align-items: center;
    justify-content: center;
    width: 25px;
    height: 25px;
    border-radius: 6px;
    font-style: normal;
    font-size: 15px;
}

.minus {
    border: 1px solid #e5e5e5;
    background-color: #f5f5f5;
    color: #b0b0b0;
}

.seg-on .minus {
    border-color: #3f8ed0;
    background-color: #e3effb;
    color: #2b6cb0;
}

.plus {
    border: 1px solid #3f8ed0;
    background-color: #fff;
    color: #2b6cb0;
}

.seg-on .plus {
    background-color: #e3effb;
}

.val {
    display: flex;
    align-items: center;
    justify-content: center;
    width: 68px;
    height: 24px;
    border: 1px solid #e3e3e3;
    border-radius: 6px;
    font-size: 14px;
}

.seg-on .val {
    border: none;
}

.modal-foot {
    display: flex;
    align-items: center;
    gap: 15px;
    flex: 1;
    margin: 0 24px;
    padding-bottom: 9px;
}

.btn {
    display: flex;
    align-items: center;
    justify-content: center;
    height: 33px;
    border-radius: 10px;
    font-size: 13px;
    font-weight: 600;
}

.btn-cancel {
    width: 81px;
    height: 31px;
    margin-right: auto;
    background-color: #1a1a1a;
    color: #fff;
}

.btn-draft {
    width: 132px;
    background-color: #727272;
    color: #eee;
}

.btn-next {
    width: 153px;
    background-color: #68d89b;
    color: #fff;
}

.modal-thumb {
    position: absolute;
    right: 8px;
    top: 114px;
    width: 6px;
    height: 300px;
    border-radius: 3px;
    background-color: #c4c4c4;
}

/* windows taskbar */
.taskbar {
    display: flex;
    align-items: center;
    flex: none;
    height: 48px;
    padding-left: 21px;
    background: linear-gradient(90deg, #2a1c28, #211e26 15%, #201e25);
    border-top: 1px solid #454349;
    font-family: "Open Sans", sans-serif;
    color: #fff;
}

.win-api .taskbar {
    background: linear-gradient(90deg, #382a22, #3a2a22 40%, #441e18);
    border-top-color: #5b4a44;
}

.startlogo {
    flex: none;
    width: 23px;
    height: 23px;
}

.tsearch {
    display: flex;
    align-items: center;
    gap: 10px;
    width: 220px;
    height: 32px;
    margin-left: 13px;
    padding-left: 11px;
    border-radius: 16px;
    background-color: rgba(255, 255, 255, 0.14);
    border: 1px solid rgba(255, 255, 255, 0.1);
    font-size: 13px;
    color: #d8d8d8;
}

.tsearch svg {
    width: 16px;
    height: 16px;
}

.apps {
    display: flex;
    margin-left: 2px;
}

.app {
    position: relative;
    display: flex;
    align-items: center;
    justify-content: center;
    width: 44px;
    height: 40px;
}

.app svg {
    width: 24px;
    height: 24px;
}

.app-on {
    background-color: rgba(255, 255, 255, 0.06);
    border-radius: 5px;
}

.app-on::after,
.app-run::after {
    content: "";
    position: absolute;
    bottom: 1px;
    left: 50%;
    width: 5px;
    height: 3px;
    margin-left: -2px;
    border-radius: 2px;
    background-color: #9a9aa0;
}

.app-on::after {
    width: 15px;
    margin-left: -7px;
    background-color: #4cc2ff;
}

.clock {
    margin-left: auto;
    padding-right: 62px;
    font-size: 11.5px;
    line-height: 16px;
    text-align: center;
}

.win-api .clock {
    margin-left: 0;
    padding-right: 19px;
    text-align: right;
}

.tray {
    display: flex;
    align-items: center;
    gap: 16px;
    margin-left: auto;
    margin-right: 18px;
}

.tray svg {
    width: 16px;
    height: 16px;
}

.tray .tray-up {
    transform: rotate(180deg);
}

.lang {
    width: 30px;
    font-size: 11.5px;
    line-height: 16px;
    text-align: center;
    margin: 0 -1px;
}

.lang + svg ~ svg {
    margin-left: -8px;
}

/* swagger page */
.page-api {
    background-color: #fafafa;
    overflow: hidden;
}

.swagger {
    flex: 1;
    min-width: 0;
    padding: 13px 21px 0 20px;
    font-family: "Liberation Sans", sans-serif;
    color: #3b4151;
}

.tag {
    margin-bottom: 15px;
}

.tag-head {
    display: flex;
    align-items: center;
    justify-content: space-between;
    height: 50px;
    margin-bottom: 5px;
    padding: 0 26px 3px 11px;
    border-bottom: 1px solid #c4c5ca;
}

.tag-head h4 {
    margin: 0;
    font-size: 24px;
    font-weight: 700;
}

.tag-head svg,
.schemas-head svg {
    width: 18px;
    height: 9px;
}

.op {
    display: flex;
    align-items: center;
    height: 40px;
    margin-bottom: 15px;
    padding: 0 13px 0 5px;
    border: 1px solid;
    border-radius: 4px;
    box-shadow: 0 0 3px rgba(0, 0, 0, 0.19);
}

.op:last-child {
    margin-bottom: 0;
}

.op-post {
    background-color: #e8f6f0;
    border-color: #49cc90;
}

.op-get {
    background-color: #ebf3fb;
    border-color: #61affe;
}

.op-patch {
    background-color: #e9f8f5;
    border-color: #50e3c2;
}

.method {
    flex: none;
    width: 80px;
    height: 28px;
    border-radius: 3px;
    font-size: 14px;
    font-weight: 700;
    line-height: 28px;
    text-align: center;
    color: #fff;
}

.op-post .method {
    background-color: #49cc90;
}

.op-get .method {
    background-color: #61affe;
}

.op-patch .method {
    background-color: #50e3c2;
}

.path {
    margin-left: 10px;
    font-family: "Liberation Mono", monospace;
    font-size: 14.67px;
    font-weight: 700;
}

.sum {
    margin-left: 10px;
    font-size: 13px;
}

.lock {
    width: 14px;
    height: 18px;
    margin-left: auto;
    margin-top: -3px;
}

.down {
    width: 18px;
    height: 9px;
    margin-left: 11px;
    margin-top: -6px;
}

.schemas {
    height: 200px;
    margin-top: 45px;
    border: 1px solid #c8c8c8;
    border-radius: 4px;
}

.schemas-head {
    display: flex;
    align-items: center;
    justify-content: space-between;
    height: 46px;
    padding: 0 20px 0 11px;
    border-bottom: 1px solid #c4c5ca;
}

.schemas-head h4 {
    margin: 0;
    font-size: 16px;
    font-weight: 700;
    color: #555;
}

.scrollbar {
    display: flex;
    flex-direction: column;
    align-items: center;
    flex: none;
    width: 14px;
    padding-top: 5px;
    background-color: #2b2b2b;
}

.arr-up {
    width: 0;
    height: 0;
    border: 4px solid transparent;
    border-top: none;
    border-bottom: 6px solid #8a8a8a;
}

.sb-thumb {
    width: 8px;
    height: 40px;
    margin-top: 293px;
    border-radius: 4px;
    background-color: #8a8a8a;
}

.arr-down {
    width: 0;
    height: 0;
    margin-top: auto;
    margin-bottom: 5px;
    border: 4px solid transparent;
    border-bottom: none;
    border-top: 6px solid #8a8a8a;
}
```
